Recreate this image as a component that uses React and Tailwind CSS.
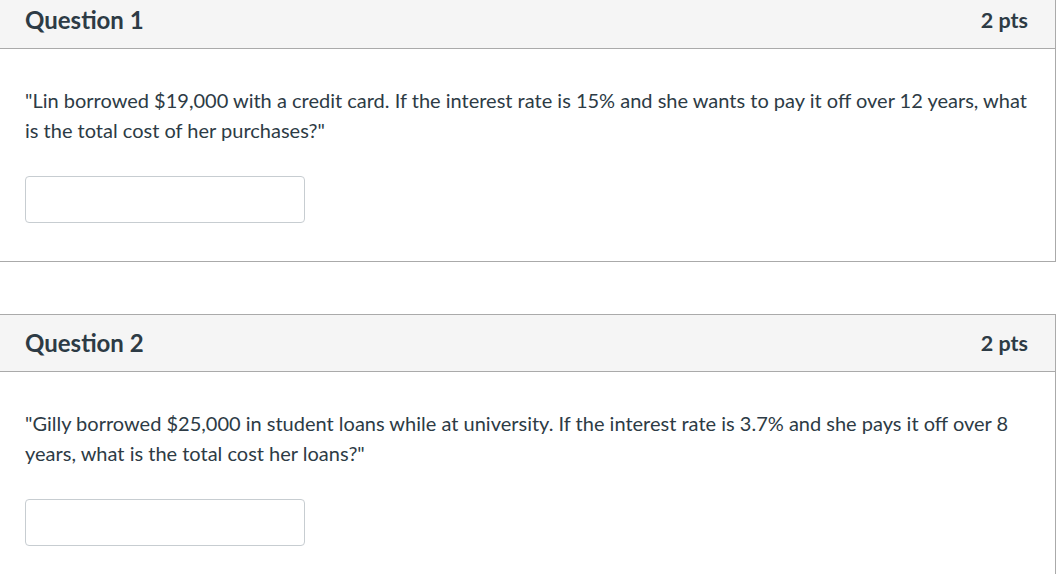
import React from "react";

const questions = [
  {
    title: "Question 1",
    points: "2 pts",
    text: "\"Lin borrowed $19,000 with a credit card. If the interest rate is 15% and she wants to pay it off over 12 years, what is the total cost of her purchases?\"",
  },
  {
    title: "Question 2",
    points: "2 pts",
    text: "\"Gilly borrowed $25,000 in student loans while at university. If the interest rate is 3.7% and she pays it off over 8 years, what is the total cost her loans?\"",
  },
];

const QuestionCard = ({ q }) => {
  return (
    <div className="w-[1056px] border border-l-0 border-[#aaaaaa] bg-white">
      <div className="flex items-center justify-between h-[57px] pl-[25px] pr-[27px] bg-[#f5f5f5] border-b border-[#aaaaaa]">
        <h2 className="text-[24px] font-bold text-[#2d3b45]">{q.title}</h2>
        <div className="text-[21.5px] font-bold text-[#2d3b45]">{q.points}</div>
      </div>
      <div className="pl-[25px] pr-[26px] pt-[36px] pb-[38px]">
        <p className="text-[20px] leading-[30px] text-[#2d3b45]">{q.text}</p>
        <input
          type="text"
          className="mt-[31px] block w-[280px] h-[47px] border border-[#c7cdd1] rounded-[4px] bg-white px-3 outline-none"
        />
      </div>
    </div>
  );
};

const App = () => {
  return (
    <div className="min-h-screen bg-white" style={{ fontFamily: "Lato, 'Helvetica Neue', Arial, sans-serif" }}>
      <div className="flex flex-col gap-[52px] mt-[-9px]">
        {questions.map((q) => (
          <QuestionCard key={q.title} q={q} />
        ))}
      </div>
    </div>
  );
};

export default App;
